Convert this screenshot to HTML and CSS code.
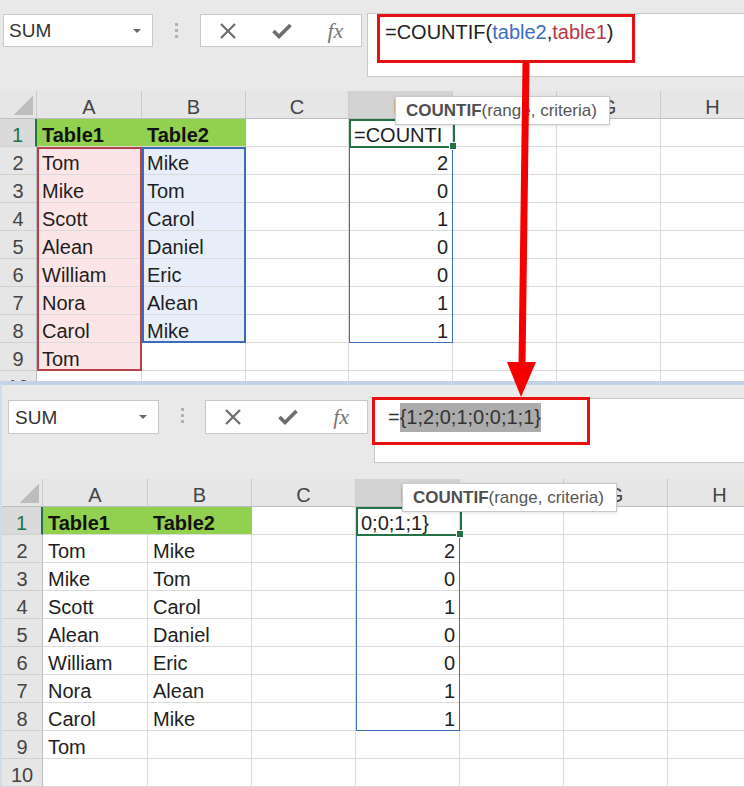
FILE: index.html
```html
<!DOCTYPE html>
<html>
<head>
<meta charset="utf-8">
<title>COUNTIF</title>
<link rel="stylesheet" href="styles.css">
</head>
<body>
<div class="page">

  <section class="win win1">
    <div class="toolbar tb1">
      <div class="namebox">SUM<span class="caret"></span></div>
      <div class="grip"><i></i><i></i><i></i></div>
      <div class="iconbox">
        <svg class="ico-x" width="18" height="16" viewBox="0 0 18 16"><path d="M2 1 L16 15 M16 1 L2 15" fill="none" stroke="#6d6d6d" stroke-width="2.2"/></svg>
        <svg class="ico-ok" width="20" height="16" viewBox="0 0 20 16"><path d="M1.5 8 L7 13.5 L18.5 2" fill="none" stroke="#6d6d6d" stroke-width="3.6"/></svg>
        <span class="fx">fx</span>
      </div>
      <div class="formula">
        <div class="redbox">=COUNTIF(<span class="ref-b">table2</span>,<span class="ref-r">table1</span>)</div>
      </div>
    </div>

    <div class="sheet sheet1">
      <div class="ch corner"></div><div class="ch">A</div><div class="ch">B</div><div class="ch">C</div><div class="ch on">D</div><div class="ch">F</div><div class="ch">G</div><div class="ch">H</div>

      <div class="rh on">1</div><div class="c g">Table1</div><div class="c g">Table2</div><div class="c"></div><div class="c">=COUNTI</div><div class="c"></div><div class="c"></div><div class="c"></div>
      <div class="rh">2</div><div class="c">Tom</div><div class="c">Mike</div><div class="c"></div><div class="c n">2</div><div class="c"></div><div class="c"></div><div class="c"></div>
      <div class="rh">3</div><div class="c">Mike</div><div class="c">Tom</div><div class="c"></div><div class="c n">0</div><div class="c"></div><div class="c"></div><div class="c"></div>
      <div class="rh">4</div><div class="c">Scott</div><div class="c">Carol</div><div class="c"></div><div class="c n">1</div><div class="c"></div><div class="c"></div><div class="c"></div>
      <div class="rh">5</div><div class="c">Alean</div><div class="c">Daniel</div><div class="c"></div><div class="c n">0</div><div class="c"></div><div class="c"></div><div class="c"></div>
      <div class="rh">6</div><div class="c">William</div><div class="c">Eric</div><div class="c"></div><div class="c n">0</div><div class="c"></div><div class="c"></div><div class="c"></div>
      <div class="rh">7</div><div class="c">Nora</div><div class="c">Alean</div><div class="c"></div><div class="c n">1</div><div class="c"></div><div class="c"></div><div class="c"></div>
      <div class="rh">8</div><div class="c">Carol</div><div class="c">Mike</div><div class="c"></div><div class="c n">1</div><div class="c"></div><div class="c"></div><div class="c"></div>
      <div class="rh">9</div><div class="c">Tom</div><div class="c"></div><div class="c"></div><div class="c"></div><div class="c"></div><div class="c"></div><div class="c"></div>
      <div class="rh">10</div><div class="c"></div><div class="c"></div><div class="c"></div><div class="c"></div><div class="c"></div><div class="c"></div><div class="c"></div>

      <div class="ov a-fill"></div>
      <div class="ov b-fill"></div>
      <div class="ov a-box"></div>
      <div class="ov b-box"></div>
      <div class="ov d-box"></div>
      <div class="ov sel"></div>
    </div>

    <div class="tip tip1"><b>COUNTIF</b>(range, criteria)</div>
  </section>

  <section class="win win2">
    <div class="toolbar tb2">
      <div class="namebox">SUM<span class="caret"></span></div>
      <div class="grip"><i></i><i></i><i></i></div>
      <div class="iconbox">
        <svg class="ico-x" width="18" height="16" viewBox="0 0 18 16"><path d="M2 1 L16 15 M16 1 L2 15" fill="none" stroke="#6d6d6d" stroke-width="2.2"/></svg>
        <svg class="ico-ok" width="20" height="16" viewBox="0 0 20 16"><path d="M1.5 8 L7 13.5 L18.5 2" fill="none" stroke="#6d6d6d" stroke-width="3.6"/></svg>
        <span class="fx">fx</span>
      </div>
      <div class="formula">
        <div class="redbox">=<span class="hl">{1;2;0;1;0;0;1;1}</span></div>
      </div>
    </div>

    <div class="sheet sheet2">
      <div class="ch corner"></div><div class="ch">A</div><div class="ch">B</div><div class="ch">C</div><div class="ch on">D</div><div class="ch">F</div><div class="ch">G</div><div class="ch">H</div>

      <div class="rh on">1</div><div class="c g">Table1</div><div class="c g">Table2</div><div class="c"></div><div class="c">0;0;1;1}</div><div class="c"></div><div class="c"></div><div class="c"></div>
      <div class="rh">2</div><div class="c">Tom</div><div class="c">Mike</div><div class="c"></div><div class="c n">2</div><div class="c"></div><div class="c"></div><div class="c"></div>
      <div class="rh">3</div><div class="c">Mike</div><div class="c">Tom</div><div class="c"></div><div class="c n">0</div><div class="c"></div><div class="c"></div><div class="c"></div>
      <div class="rh">4</div><div class="c">Scott</div><div class="c">Carol</div><div class="c"></div><div class="c n">1</div><div class="c"></div><div class="c"></div><div class="c"></div>
      <div class="rh">5</div><div class="c">Alean</div><div class="c">Daniel</div><div class="c"></div><div class="c n">0</div><div class="c"></div><div class="c"></div><div class="c"></div>
      <div class="rh">6</div><div class="c">William</div><div class="c">Eric</div><div class="c"></div><div class="c n">0</div><div class="c"></div><div class="c"></div><div class="c"></div>
      <div class="rh">7</div><div class="c">Nora</div><div class="c">Alean</div><div class="c"></div><div class="c n">1</div><div class="c"></div><div class="c"></div><div class="c"></div>
      <div class="rh">8</div><div class="c">Carol</div><div class="c">Mike</div><div class="c"></div><div class="c n">1</div><div class="c"></div><div class="c"></div><div class="c"></div>
      <div class="rh">9</div><div class="c">Tom</div><div class="c"></div><div class="c"></div><div class="c"></div><div class="c"></div><div class="c"></div><div class="c"></div>
      <div class="rh">10</div><div class="c"></div><div class="c"></div><div class="c"></div><div class="c"></div><div class="c"></div><div class="c"></div><div class="c"></div>

      <div class="ov d-box"></div>
      <div class="ov sel"></div>
    </div>

    <div class="tip tip2"><b>COUNTIF</b>(range, criteria)</div>
  </section>

  <svg class="arrow" width="744" height="787" viewBox="0 0 744 787">
    <line x1="526" y1="62" x2="522" y2="366" stroke="#f40000" stroke-width="7"/>
    <polygon points="507,362 536,362 521,397" fill="#f40000"/>
  </svg>
</div>
</body>
</html>
```

FILE: styles.css
```css
* { box-sizing: border-box; }
html, body { margin: 0; padding: 0; }
body {
  width: 744px;
  height: 787px;
  overflow: hidden;
  background: #fff;
  font-family: "Liberation Sans", Arial, sans-serif;
  color: #1e1e1e;
}
.page {
  position: relative;
  width: 744px;
  height: 787px;
  overflow: hidden;
}

/* windows */
.win {
  position: relative;
  overflow: hidden;
  background: #e9e9e9;
}
.win1 { height: 381px; }
.win2 {
  height: 406px;
  border-top: 4px solid #c3d3e6;
  border-left: 2px solid #cfdcec;
}

/* toolbar */
.toolbar {
  display: flex;
  align-items: flex-start;
  background: #e9e9e9;
}
.tb1 { height: 91px; padding: 13px 0 0 3px; }
.tb2 { height: 94px; padding: 13px 0 0 6px; }

.namebox {
  position: relative;
  background: #fff;
  border: 1px solid #c8c8c8;
  font-size: 19px;
  color: #333;
  white-space: nowrap;
}
.tb1 .namebox { width: 150px; height: 33px; margin-top: 1px; padding: 1px 0 0 5px; line-height: 30px; }
.tb2 .namebox { width: 151px; height: 34px; margin-top: 2px; padding: 1px 0 0 6px; line-height: 31px; }
.caret {
  position: absolute;
  right: 11px;
  top: 14px;
  width: 0;
  height: 0;
  border-left: 4px solid transparent;
  border-right: 4px solid transparent;
  border-top: 4px solid #6a6a6a;
}

.grip {
  display: flex;
  flex-direction: column;
  align-items: center;
  gap: 3px;
  padding-top: 10px;
}
.tb1 .grip { width: 47px; }
.tb2 .grip { width: 46px; }
.grip i {
  display: block;
  width: 3px;
  height: 3px;
  background: #b2b2b2;
}

.iconbox {
  display: flex;
  justify-content: space-around;
  align-items: center;
  background: #fff;
  border: 1px solid #c8c8c8;
}
.tb1 .iconbox { width: 162px; height: 33px; margin-top: 1px; }
.tb2 .iconbox { width: 163px; height: 34px; margin-top: 2px; }
.fx {
  font-family: "Liberation Serif", serif;
  font-style: italic;
  font-size: 22px;
  color: #777;
  line-height: 22px;
}

.formula {
  flex: 1;
  background: #fff;
  border: 1px solid #c8c8c8;
  border-right: none;
}
.tb1 .formula { margin-left: 5px; height: 64px; }
.tb2 .formula { margin-left: 6px; height: 65px; }

.redbox {
  border: 3px solid #e81010;
  font-size: 20px;
  color: #222;
  white-space: nowrap;
}
.tb1 .redbox { width: 258px; height: 49px; margin: 0 0 0 9px; padding: 2px 0 0 5px; line-height: 27px; }
.tb2 .redbox { width: 218px; height: 48px; margin: -2px 0 0 -3px; padding: 3px 0 0 13px; line-height: 29px; color: #333; }
.ref-b { color: #3a6fc4; }
.ref-r { color: #b8374a; }
.hl {
  display: inline-block;
  height: 29px;
  line-height: 29px;
  background: #acacac;
  color: #333;
}

/* sheet grid */
.sheet {
  position: relative;
  z-index: 0;
  display: grid;
  grid-auto-rows: 28px;
  background: #fff;
  font-size: 20px;
}
.sheet1 { grid-template-columns: 37px 105px 104px 103px 104px 104px 104px 104px; }
.sheet2 { grid-template-columns: 41px 105px 104px 104px 104px 104px 104px 104px; }

.c, .ch, .rh {
  padding: 5px 4px 0 5px;
  line-height: 23px;
  white-space: nowrap;
}
.c {
  border-right: 1px solid #dadada;
  border-bottom: 1px solid #dadada;
}
.c.n { text-align: right; padding-right: 4px; }
.c.g {
  background: #92d050;
  font-weight: bold;
  color: #111;
  border-right-color: #92d050;
}

.ch {
  background: #e6e6e6;
  color: #444;
  text-align: center;
  border-right: 1px solid #cbcbcb;
  border-bottom: 1px solid #bdbdbd;
  padding-left: 0;
  padding-right: 0;
}
.ch.on { background: #d3d3d3; }
.ch.corner {
  background:
    linear-gradient(to bottom right, transparent 50%, #bdbdbd 50%) no-repeat right 3px bottom 3px / 20px 19px,
    #e6e6e6;
}
.rh {
  background: #e6e6e6;
  color: #444;
  text-align: center;
  border-right: 1px solid #bdbdbd;
  border-bottom: 1px solid #d0d0d0;
  padding-left: 0;
  padding-right: 0;
}
.rh.on {
  background: #dadada;
  color: #217346;
  border-right: 2px solid #217346;
}

/* range overlays (placed in grid areas) */
.ov { position: absolute; top: 0; bottom: 0; left: 0; right: 0; }
.a-fill { grid-column: 2 / 3; grid-row: 3 / 11; background: #fce5e6; z-index: -1; }
.b-fill { grid-column: 3 / 4; grid-row: 3 / 10; background: #e8eef9; z-index: -1; }
.a-box { grid-column: 2 / 3; grid-row: 3 / 11; border: 2px solid #b5444a; z-index: 1; }
.b-box { grid-column: 3 / 4; grid-row: 3 / 10; border: 2px solid #3a6db3; z-index: 1; }
.d-box { grid-column: 5 / 6; grid-row: 3 / 10; border: 1px solid #3d6db5; z-index: 1; }
.sel {
  grid-column: 5 / 6;
  grid-row: 2 / 3;
  top: 0;
  right: -2px;
  bottom: -1px;
  border: 2px solid #217346;
  z-index: 2;
}
.sel::after {
  content: "";
  position: absolute;
  right: -4px;
  bottom: -4px;
  width: 6px;
  height: 6px;
  background: #217346;
  border: 1px solid #fff;
}

/* tooltips */
.tip {
  position: absolute;
  width: 215px;
  height: 29px;
  padding-left: 10px;
  background: #fff;
  border: 1px solid #c9c9c9;
  box-shadow: 0 1px 3px rgba(0, 0, 0, 0.12);
  font-size: 17px;
  line-height: 27px;
  color: #555;
  white-space: nowrap;
  z-index: 5;
}
.tip b { color: #4e4e4e; }
.tip1 { left: 395px; top: 96px; }
.tip2 { left: 400px; top: 98px; }

/* annotation arrow */
.arrow {
  position: absolute;
  left: 0;
  top: 0;
  pointer-events: none;
  z-index: 10;
}
```
